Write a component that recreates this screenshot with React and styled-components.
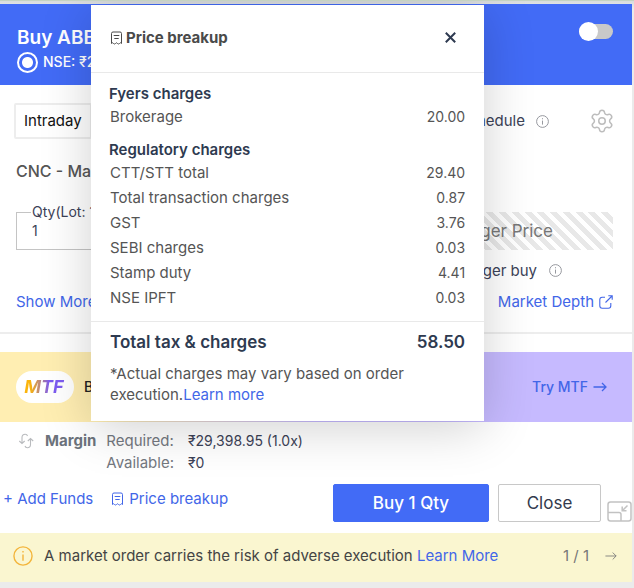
import styled, { createGlobalStyle, css } from "styled-components";
import { Settings } from "lucide-react";

const GlobalStyle = createGlobalStyle`
	* {
		box-sizing: border-box;
	}
	body {
		margin: 0;
		background: #ebebeb;
		font-family: Inter, "Open Sans", sans-serif;
		font-size: 15px;
		line-height: 22px;
		color: #3c4257;
	}
	button, input {
		font: inherit;
	}
`;

const Page = styled.div`
	position: relative;
	overflow: hidden;
	padding: 2px 2px 7px 0;
	border-top: 1px solid #c5d3c1;
	background: linear-gradient(#d8dcdd, #ebebeb 8px);
`;

const Panel = styled.main`
	margin-top: 1px;
	background: #fff;
`;

const Header = styled.header`
	display: flex;
	justify-content: space-between;
	align-items: flex-start;
	height: 81px;
	padding: 18px 19px 0 17px;
	background: #426bf6;
	color: #fff;
`;

const Symbol = styled.h1`
	margin: 0;
	padding-top: 3px;
	font-size: 19px;
	line-height: 26px;
	font-weight: 600;
`;

const Exchange = styled.label`
	display: flex;
	align-items: center;
	gap: 5px;
	font-size: 14px;
	font-weight: 500;
`;

const Radio = styled.input`
	appearance: none;
	width: 21px;
	height: 21px;
	margin: 0;
	border: 2px solid #fff;
	border-radius: 50%;
	background: radial-gradient(circle, #fff 5px, transparent 6px);
`;

const Switch = styled.input`
	appearance: none;
	display: flex;
	align-items: center;
	width: 34px;
	height: 15px;
	margin: 2px 0;
	border-radius: 8px;
	background: #c9c9c9;
	&::before {
		content: "";
		flex: none;
		width: 19px;
		height: 19px;
		border-radius: 50%;
		background: #fff;
	}
`;

const Form = styled.section`
	display: flex;
	flex-direction: column;
	padding: 18px 19px 19px 16px;
	border-bottom: 2px solid #ededed;
`;

const Row = styled.div`
	display: flex;
	justify-content: space-between;
	align-items: center;
	gap: 12px;
	height: ${(props) => props.$height}px;
`;

const Cluster = styled.div`
	display: flex;
	align-items: center;
	gap: 11px;
	svg:last-child {
		flex: none;
	}
`;

const ProductButton = styled.button`
	height: 36px;
	padding: 0 8px;
	border: 2px solid #ededed;
	border-radius: 2px;
	background: transparent;
	color: #111;
	margin-left: -2px;
`;

const OrderType = styled.h2`
	margin: 0;
	font-size: 16px;
	line-height: 24px;
	font-weight: 500;
	color: #555;
	padding: 20px 0 17px;
`;

const Fields = styled.div`
	display: grid;
	grid-template-columns: 1fr 1fr;
	gap: 36px;
	align-items: end;
`;

const QtyBox = styled.fieldset`
	min-width: 0;
	height: 50px;
	margin: 0;
	padding: 0 14px;
	border: 1px solid #c4c4c4;
	font-size: 14px;
	legend {
		padding: 0 1px;
		line-height: 24px;
	}
	input {
		display: block;
		width: 100%;
		height: 14px;
		padding: 0 1px;
		border: 0;
		outline: 0;
		background: transparent;
		color: #3c4257;
	}
`;

const TriggerInput = styled.input`
	width: 100%;
	height: 38px;
	padding: 0 60px 0 0;
	border: 0;
	font-size: 17px;
	text-align: right;
	background: repeating-linear-gradient(
		45deg,
		#e8e8e8 0 5px,
		#fff 5px 9px
	);
	&::placeholder {
		color: #777;
		opacity: 1;
	}
`;

const TriggerRow = styled(Row)`
	justify-content: flex-end;
	padding-right: 51px;
`;

const TextLink = styled.a`
	display: inline-flex;
	align-items: center;
	gap: 5px;
	color: #4266e8;
	text-decoration: none;
	white-space: nowrap;
`;

const MtfBanner = styled.section`
	display: flex;
	align-items: center;
	gap: 10px;
	height: 70px;
	margin-top: 18px;
	padding: 0 25px 0 16px;
	background: linear-gradient(90deg, #ffeeb2 16%, #c6baff 50%);
	font-size: 14px;
	font-weight: 500;
	color: #222;
	a {
		margin-left: auto;
	}
`;

const MtfPill = styled.div`
	display: grid;
	place-items: center;
	width: 58px;
	height: 32px;
	border-radius: 16px;
	background: #fff;
	span {
		padding-right: 2px;
		font-size: 18px;
		font-weight: 700;
		font-style: italic;
		background: linear-gradient(90deg, #fbb40c 15%, #7d5cf0 60%);
		background-clip: text;
		color: transparent;
	}
`;

const Margin = styled.section`
	display: flex;
	gap: 10px;
	padding: 8px 18px 0;
	strong {
		color: #6d737c;
		font-weight: 700;
	}
	svg {
		margin-top: 2px;
	}
`;

const MarginList = styled.dl`
	display: grid;
	grid-template-columns: auto auto;
	column-gap: 14px;
	margin: 0;
	dt {
		color: #74787f;
	}
	dd {
		margin: 0;
		font-size: 14px;
	}
`;

const Actions = styled.section`
	display: flex;
	align-items: flex-start;
	padding: 10px 0 11px 3px;
`;

const ActionLinks = styled.nav`
	display: flex;
	gap: 18px;
	padding-top: 4px;
`;

const ActionButtons = styled.div`
	display: flex;
	align-items: flex-end;
	gap: 9px;
	margin-left: auto;
`;

const ActionButton = styled.button`
	width: ${(props) => (props.$primary ? 156 : 103)}px;
	height: 38px;
	padding: 0;
	border: 1px solid #c8c8c8;
	border-radius: 2px;
	background: #fff;
	color: #333a4d;
	font-size: 17px;
	${(props) =>
		props.$primary &&
		css`
			border-color: #426bf6;
			background: #426bf6;
			color: #fff;
			font-weight: 500;
		`}
`;

const IconButton = styled.button`
	display: flex;
	padding: 0;
	border: 0;
	background: none;
	color: inherit;
`;

const GearButton = styled(IconButton)`
	margin-left: 29px;
	margin-right: -2px;
`;

const ShrinkButton = styled(IconButton)`
	margin-left: -3px;
`;

const Notice = styled.footer`
	display: flex;
	align-items: center;
	gap: 11px;
	height: 49px;
	padding: 0 15px 4px 13px;
	background: #faf6d0;
	color: #444;
	white-space: nowrap;
	a {
		display: inline;
	}
`;

const Pager = styled.div`
	display: flex;
	align-items: center;
	gap: 16px;
	margin-left: auto;
	color: #777;
`;

const Modal = styled.div`
	position: absolute;
	top: 4px;
	left: 91px;
	width: 62%;
	background: #fff;
	box-shadow: 0 6px 48px rgba(0, 0, 0, 0.19);
	color: #555;
`;

const ModalHeader = styled.div`
	display: flex;
	justify-content: space-between;
	align-items: center;
	height: 68px;
	padding: 0 28px 2px 19px;
	border-bottom: 1px solid #e9e9e9;
`;

const ModalTitle = styled.h2`
	display: flex;
	align-items: center;
	gap: 3px;
	margin: 0;
	font-size: 15px;
	font-weight: 700;
	color: #4a4a4a;
`;

const Charges = styled.table`
	width: calc(100% - 37px);
	margin: 0 19px 11px 18px;
	border-collapse: collapse;
	th {
		padding: 10px 0 0;
		text-align: left;
		line-height: 21px;
		font-weight: 600;
		color: #2e3a50;
	}
	td {
		padding: 0 0 0 1px;
		line-height: 25px;
	}
	td + td {
		text-align: right;
		font-size: 14px;
	}
`;

const ModalFooter = styled.div`
	padding: 8px 19px 16px;
	border-top: 1px solid #e9e9e9;
`;

const Total = styled.div`
	display: flex;
	justify-content: space-between;
	font-size: 17px;
	line-height: 24px;
	font-weight: 600;
	color: #2e3a50;
`;

const Note = styled.p`
	margin: 9px 0 0;
	line-height: 21px;
	a {
		color: #4266e8;
		text-decoration: none;
	}
`;

const groups = [
	{ title: "Fyers charges", rows: [["Brokerage", "20.00"]] },
	{
		title: "Regulatory charges",
		rows: [
			["CTT/STT total", "29.40"],
			["Total transaction charges", "0.87"],
			["GST", "3.76"],
			["SEBI charges", "0.03"],
			["Stamp duty", "4.41"],
			["NSE IPFT", "0.03"],
		],
	},
];

const Receipt = () => (
	<svg width="13" height="14" viewBox="0 0 12 14" fill="none" stroke="currentColor">
		<path d="M1 11V2.5Q1 1 2.5 1h7Q11 1 11 2.5V11M3.2 4.5h5.6M3.8 7.5h4.4" />
		<path d="M1 10.5v2q1-1.5 2 0 1 1 2 0 1-1.5 2 0 1 1 2 0 1-1.5 2 0v-2" />
	</svg>
);

const Info = ({ size = 13, color = "#8b8d94" }) => (
	<svg width={size} height={size} viewBox="0 0 13 13" fill="none" stroke={color}>
		<circle cx="6.5" cy="6.5" r="5.9" strokeWidth="0.9" />
		<path d="M6.5 5.6v4M6.5 3.2v1.1" strokeWidth="0.9" />
	</svg>
);

const Arrow = ({ width = 14, weight = 1.3 }) => (
	<svg width={width} height="10" viewBox="0 0 14 10" fill="none" stroke="currentColor" strokeWidth={weight}>
		<path d="M.5 5h12.5M9 1l4 4-4 4" />
	</svg>
);

const External = () => (
	<svg width="14" height="14" viewBox="0 0 14 14" fill="none" stroke="currentColor" strokeWidth="1.1">
		<path d="M6 2.2H3.2Q.8 2.2.8 4.6v6.2q0 2.4 2.4 2.4h6.2q2.4 0 2.4-2.4V8" />
		<path d="M6.5 7.5 13 1M9.3.8h3.9v3.9" />
	</svg>
);

const Refresh = () => (
	<svg width="17" height="18" viewBox="0 0 17 18" fill="none" stroke="#b9bbbe" strokeWidth="1.1">
		<path d="M9.5 4Q9 2.3 7.2 2.3 4 2.3 4 5.5v5.8M1.3 9l2.7 2.5L6.7 9" />
		<path d="M7 14q.5 1.7 2.3 1.7 3.2 0 3.2-3.2V6.7M9.8 9l2.7-2.5L15.2 9" />
	</svg>
);

const Shrink = () => (
	<svg width="25" height="21" viewBox="0 0 25 21" fill="none" stroke="#c2c2c2" strokeWidth="1.5">
		<rect x="1" y="1" width="23" height="19" rx="2.5" />
		<path d="M1 11.5h11q2 0 2 2V20M20.5 4.5l-5 5M15.2 5.5v4.3h4.3" />
	</svg>
);

const Close = () => (
	<svg width="11" height="11" viewBox="0 0 11 11" stroke="#2e3a50" strokeWidth="2">
		<path d="m.8.8 9.4 9.4m0-9.4L.8 10.2" />
	</svg>
);

function OrderForm() {
	return (
		<Form>
			<Row $height={36}>
				<ProductButton>Intraday</ProductButton>
				<Cluster>
					<span>Schedule</span>
					<Info />
					<GearButton aria-label="Settings">
						<Settings size={26} strokeWidth={1.4} color="#bdbdbd" />
					</GearButton>
				</Cluster>
			</Row>
			<OrderType>CNC - Market</OrderType>
			<Fields>
				<QtyBox>
					<legend>
						<label htmlFor="qty">Qty(Lot: 1)</label>
					</legend>
					<input id="qty" defaultValue="1" />
				</QtyBox>
				<TriggerInput aria-label="Trigger Price" placeholder="Trigger Price" disabled />
			</Fields>
			<TriggerRow $height={41}>
				<span>Trigger buy</span>
				<Info />
			</TriggerRow>
			<Row $height={22}>
				<TextLink href="#more">Show More</TextLink>
				<TextLink href="#depth">
					Market Depth <External />
				</TextLink>
			</Row>
		</Form>
	);
}

function PriceBreakup() {
	return (
		<Modal role="dialog" aria-labelledby="breakup-title">
			<ModalHeader>
				<ModalTitle id="breakup-title">
					<Receipt />
					Price breakup
				</ModalTitle>
				<IconButton aria-label="Close price breakup">
					<Close />
				</IconButton>
			</ModalHeader>
			<Charges>
				{groups.map((group) => (
					<tbody key={group.title}>
						<tr>
							<th colSpan={2}>{group.title}</th>
						</tr>
						{group.rows.map(([name, amount]) => (
							<tr key={name}>
								<td>{name}</td>
								<td>{amount}</td>
							</tr>
						))}
					</tbody>
				))}
			</Charges>
			<ModalFooter>
				<Total>
					<span>Total tax &amp; charges</span>
					<span>58.50</span>
				</Total>
				<Note>
					*Actual charges may vary based on order execution.
					<a href="#learn">Learn more</a>
				</Note>
			</ModalFooter>
		</Modal>
	);
}

function App() {
	return (
		<Page>
			<GlobalStyle />
			<Panel>
				<Header>
					<div>
						<Symbol>Buy ABB</Symbol>
						<Exchange>
							<Radio type="radio" name="exchange" defaultChecked />
							NSE: ₹2
						</Exchange>
					</div>
					<Switch type="checkbox" role="switch" aria-label="Sell" />
				</Header>
				<OrderForm />
				<MtfBanner>
					<MtfPill>
						<span>MTF</span>
					</MtfPill>
					Buy
					<TextLink href="#mtf">
						Try MTF <Arrow />
					</TextLink>
				</MtfBanner>
				<Margin>
					<Refresh />
					<strong>Margin</strong>
					<MarginList>
						<dt>Required:</dt>
						<dd>₹29,398.95 (1.0x)</dd>
						<dt>Available:</dt>
						<dd>₹0</dd>
					</MarginList>
				</Margin>
				<Actions>
					<ActionLinks>
						<TextLink href="#funds">+ Add Funds</TextLink>
						<TextLink href="#breakup">
							<Receipt /> Price breakup
						</TextLink>
					</ActionLinks>
					<ActionButtons>
						<ActionButton $primary>Buy 1 Qty</ActionButton>
						<ActionButton>Close</ActionButton>
						<ShrinkButton aria-label="Shrink window">
							<Shrink />
						</ShrinkButton>
					</ActionButtons>
				</Actions>
				<Notice>
					<Info size={20} color="#f3b53c" />
					<span>
						A market order carries the risk of adverse execution{" "}
						<TextLink href="#risk">Learn More</TextLink>
					</span>
					<Pager>
						1 / 1
						<IconButton aria-label="Next notice">
							<Arrow width={12} weight={1} />
						</IconButton>
					</Pager>
				</Notice>
			</Panel>
			<PriceBreakup />
		</Page>
	);
}

export default App;
